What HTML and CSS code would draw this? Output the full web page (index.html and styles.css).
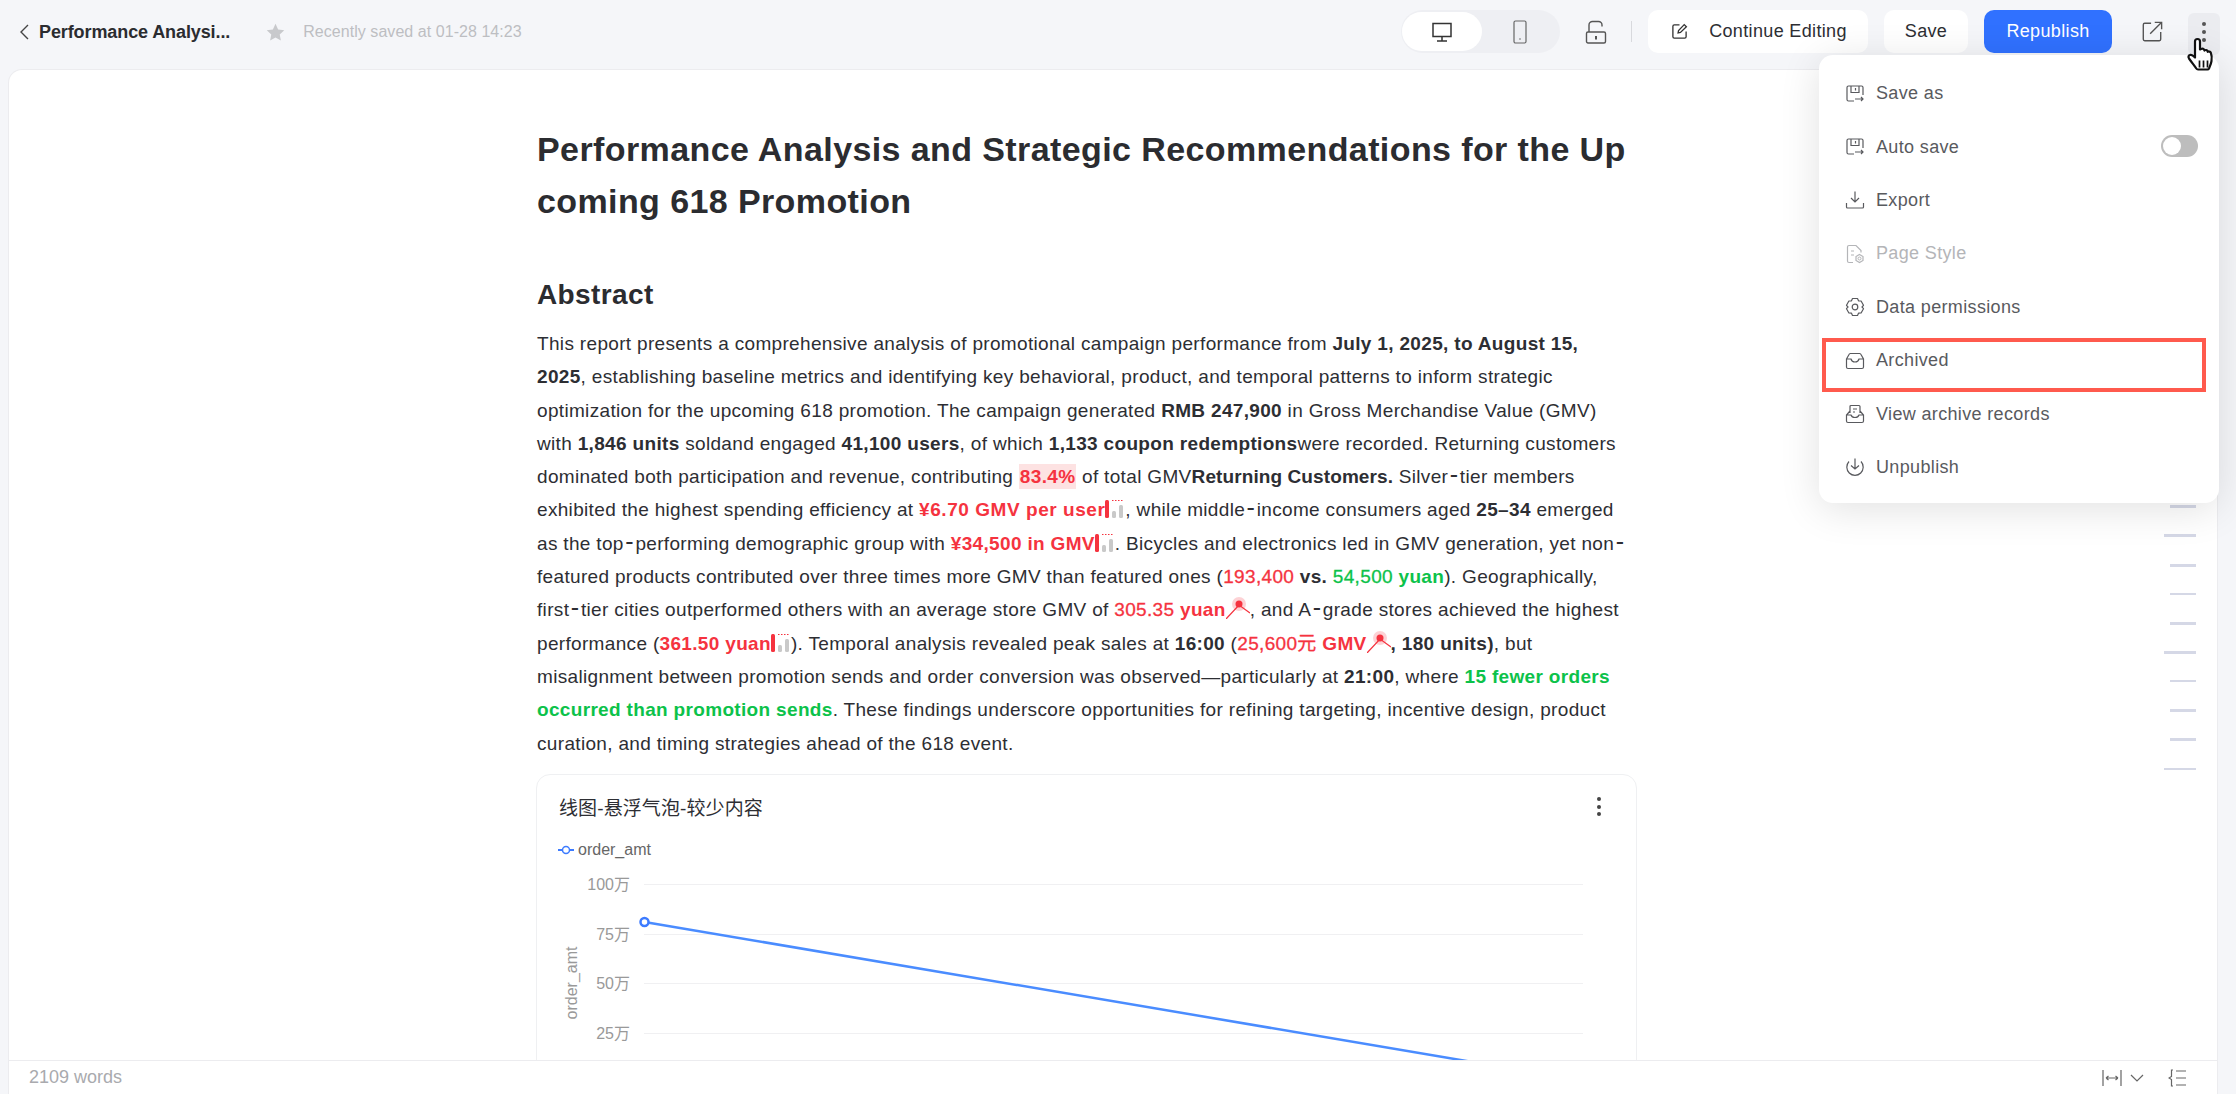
FILE: index.html
```html
<!DOCTYPE html>
<html lang="en">
<head>
    <meta charset="UTF-8">
    <title>Performance Analysis</title>
    <link rel="stylesheet" href="styles.css">
</head>
<body>
    <svg class="icon-defs" width="0" height="0">
        <symbol id="i-bars" viewBox="0 0 20 20">
            <rect x="0" y="1" width="4" height="18" rx="1.5" fill="#f5333f"/>
            <path d="M7 1.5h12" stroke="#f5333f" stroke-width="1" stroke-dasharray="1.5 1.5" fill="none"/>
            <rect x="7" y="12" width="4" height="7" rx="1.5" fill="#c9c9c9"/>
            <rect x="14" y="6" width="4" height="13" rx="1.5" fill="#c9c9c9"/>
        </symbol>
        <symbol id="i-peak" viewBox="0 0 24 22">
            <circle cx="13" cy="7" r="7" fill="#f5333f" opacity=".22"/>
            <circle cx="13" cy="7" r="3.500" fill="#f5333f"/>
            <path d="M0 22 13 8l11 8" stroke="#f5333f" stroke-width="1.3" fill="none"/>
        </symbol>
        <symbol id="i-save" viewBox="0 0 20 20">
            <path d="M9 17H3.500A1.500 1.500 0 0 1 2 15.500V3.500A1.500 1.500 0 0 1 3.500 2h13A1.500 1.500 0 0 1 18 3.500V11M6 2v6.500h8V2M10.500 4v2.500M10 15h8M16 13l2 2-2 2" fill="none" stroke="currentColor" stroke-width="1.200"/>
        </symbol>
    </svg>

    <header class="topbar">
        <div class="topbar-left">
            <svg class="back" width="10" height="16" viewBox="0 0 10 16"><path d="M9 1 2 8l7 7" fill="none" stroke="#444" stroke-width="1.400"/></svg>
            <span class="doc-name">Performance Analysi...</span>
            <svg class="star" width="19" height="19" viewBox="0 0 18 18"><path d="m9 .8 2.500 5.300 5.800.7-4.300 4 1.100 5.700L9 13.700l-5.100 2.800L5 10.800l-4.300-4 5.800-.7z" fill="#c8c9cc"/></svg>
            <span class="saved">Recently saved at 01-28 14:23</span>
        </div>
        <div class="topbar-right">
            <div class="device-switch">
                <span class="device active">
                    <svg width="22" height="22" viewBox="0 0 22 22"><path d="M2 2.500h18v13H2zM11 15.500V20M6 20h10" fill="none" stroke="#333" stroke-width="1.500"/></svg>
                </span>
                <span class="device">
                    <svg width="16" height="24" viewBox="0 0 16 24"><rect x="2" y="1" width="12" height="22" rx="1.500" fill="none" stroke="#666" stroke-width="1.200"/><circle cx="8" cy="19" r=".8" fill="#666"/></svg>
                </span>
            </div>
            <svg class="lock" width="22" height="24" viewBox="0 0 22 24"><path d="M4 12V5a3.500 3.500 0 0 1 3.500-3.500h6A3.500 3.500 0 0 1 17 5v1.500" fill="none" stroke="#555" stroke-width="1.400"/><rect x="1.500" y="12" width="19" height="11" rx="1.500" fill="none" stroke="#555" stroke-width="1.400"/><path d="M11 16v3.500" stroke="#555" stroke-width="2"/></svg>
            <span class="divider"></span>
            <button class="btn btn-edit">
                <svg width="17" height="17" viewBox="0 0 18 18"><path d="M9 2H3.500A1.500 1.500 0 0 0 2 3.500v11A1.500 1.500 0 0 0 3.500 16h11a1.500 1.500 0 0 0 1.500-1.500V9M7.500 10.500 8 8l6-6.300 2.300 2.300L10 10z" fill="none" stroke="#333" stroke-width="1.400"/></svg>
                <span>Continue Editing</span>
            </button>
            <button class="btn btn-save">Save</button>
            <button class="btn btn-primary">Republish</button>
            <svg class="open" width="22" height="22" viewBox="0 0 24 24"><path d="M11 2.500H4A1.500 1.500 0 0 0 2.500 4v16A1.500 1.500 0 0 0 4 21.500h16a1.500 1.500 0 0 0 1.500-1.500v-8M10 14 22 2M15 1.500h7.500V9" fill="none" stroke="#555" stroke-width="1.500"/></svg>
            <span class="more">
                <i></i><i></i><i></i>
            </span>
        </div>
    </header>

    <main class="sheet">
        <div class="scroll">
            <article class="doc">
                <h1>Performance Analysis and Strategic Recommendations for the Up<br>coming 618 Promotion</h1>
                <h2>Abstract</h2>
                <p class="body-text">
                    This report presents a comprehensive analysis of promotional campaign performance from <b>July 1, 2025, to August 15,</b><br>
                    <b>2025</b>, establishing baseline metrics and identifying key behavioral, product, and temporal patterns to inform strategic<br>
                    optimization for the upcoming 618 promotion. The campaign generated <b>RMB 247,900</b> in Gross Merchandise Value (GMV)<br>
                    with <b>1,846 units</b> soldand engaged <b>41,100 users</b>, of which <b>1,133 coupon redemptions</b>were recorded. Returning customers<br>
                    dominated both participation and revenue, contributing <span class="mark">83.4%</span> of total GMV<b class="tight">Returning Customers.</b> Silver<span class="hy">-</span>tier members<br>
                    exhibited the highest spending efficiency at <b class="up wide">¥6.70 GMV per user</b><svg class="mini"><use href="#i-bars"/></svg>, while middle<span class="hy">-</span>income consumers aged <b>25–34</b> emerged<br>
                    as the top<span class="hy">-</span>performing demographic group with <b class="up">¥34,500 in GMV</b><svg class="mini"><use href="#i-bars"/></svg>. Bicycles and electronics led in GMV generation, yet non<span class="hy">-</span><br>
                    featured products contributed over three times more GMV than featured ones (<span class="up num">193,400</span> <b>vs.</b> <span class="down num">54,500</span> <b class="down">yuan</b>). Geographically,<br>
                    first<span class="hy">-</span>tier cities outperformed others with an average store GMV of <span class="up num">305.35</span> <b class="up">yuan</b><svg class="mini mini-peak"><use href="#i-peak"/></svg>, and A<span class="hy">-</span>grade stores achieved the highest<br>
                    performance (<b class="up">361.50 yuan</b><svg class="mini"><use href="#i-bars"/></svg>). Temporal analysis revealed peak sales at <b>16:00</b> (<span class="up num">25,600元</span> <b class="up">GMV</b><svg class="mini mini-peak"><use href="#i-peak"/></svg><b>, 180 units)</b>, but<br>
                    misalignment between promotion sends and order conversion was observed—particularly at <b>21:00</b>, where <b class="down">15 fewer orders</b><br>
                    <b class="down">occurred than promotion sends</b>. These findings underscore opportunities for refining targeting, incentive design, product<br>
                    curation, and timing strategies ahead of the 618 event.
                </p>
                <section class="chart-card">
                    <div class="chart-head">
                        <span class="chart-title">线图-悬浮气泡-较少内容</span>
                        <span class="kebab"><i></i><i></i><i></i></span>
                    </div>
                    <div class="legend">
                        <svg width="16" height="10" viewBox="0 0 16 10"><path d="M0 5h16" stroke="#3d7bff" stroke-width="2"/><circle cx="8" cy="5" r="3.500" fill="#fff" stroke="#3d7bff" stroke-width="1.500"/></svg>
                        <span>order_amt</span>
                    </div>
                    <svg class="plot" width="1098" height="220" viewBox="0 0 1098 220">
                        <g class="grid">
                            <path d="M106 16.500h939M106 66.500h939M106 115.500h939M106 165.500h939"/>
                        </g>
                        <g class="ticks">
                            <text x="92" y="22">100万</text>
                            <text x="92" y="72">75万</text>
                            <text x="92" y="121">50万</text>
                            <text x="92" y="171">25万</text>
                        </g>
                        <text class="axis-name" transform="translate(39 115) rotate(-90)">order_amt</text>
                        <path d="M106.500 54 1100 222" fill="none" stroke="#4a8cff" stroke-width="2.500"/>
                        <circle cx="106.500" cy="54" r="4" fill="#fff" stroke="#3d7bff" stroke-width="2.500"/>
                    </svg>
                </section>
            </article>
        </div>
        <footer class="statusbar">
            <span class="word-count">2109 words</span>
            <div class="status-tools">
                <svg width="20" height="18" viewBox="0 0 20 18"><path d="M1 1v16M19 1v16M4 9h12M4 9l2.500-2M4 9l2.500 2M16 9l-2.500-2M16 9l-2.500 2" fill="none" stroke="#666" stroke-width="1.200"/></svg>
                <svg class="caret" width="14" height="8" viewBox="0 0 14 8"><path d="m1 1 6 6 6-6" fill="none" stroke="#666" stroke-width="1.200"/></svg>
                <svg class="outline" width="18" height="18" viewBox="0 0 18 18"><path d="M5 1H3.500v6.500L1 9l2.500 1.500V17H5M8 2h10M8 9h10M8 16h10" fill="none" stroke="#666" stroke-width="1.200"/></svg>
            </div>
        </footer>
    </main>

    <!-- outline ticks, right edge of the sheet -->
    <div class="toc">
        <i></i><i class="long"></i><i></i><i class="thin"></i><i></i><i class="long"></i><i class="thin"></i><i></i><i></i><i class="long thin"></i>
    </div>

    <div class="menu">
        <div class="menu-item"><svg width="20" height="20"><use href="#i-save"/></svg>Save as</div>
        <div class="menu-item"><svg width="20" height="20"><use href="#i-save"/></svg>Auto save<span class="switch"></span></div>
        <div class="menu-item">
            <svg width="20" height="20" viewBox="0 0 20 20"><path d="M10 1.500V12M6 8l4 4 4-4M1.500 13v4a1 1 0 0 0 1 1h15a1 1 0 0 0 1-1v-4" fill="none" stroke="currentColor" stroke-width="1.200"/></svg>Export
        </div>
        <div class="menu-item disabled">
            <svg width="20" height="20" viewBox="0 0 20 20"><path d="M8 18.500H4a1.500 1.500 0 0 1-1.500-1.500V3A1.500 1.500 0 0 1 4 1.500h7l5 5v2M6 7h3M6 11h3" fill="none" stroke="currentColor" stroke-width="1.200"/><circle cx="14.500" cy="14.500" r="1.500" fill="none" stroke="currentColor"/><path d="m14.500 10.500 3.500 2v4l-3.500 2-3.500-2v-4z" fill="none" stroke="currentColor" stroke-width="1.200"/></svg>Page Style
        </div>
        <div class="menu-item">
            <svg width="20" height="20" viewBox="0 0 20 20"><path d="M7.500 1.500h5l1 2.300 2.600.2 2.400 4.300-1.500 1.700 1.500 1.700-2.400 4.300-2.600.2-1 2.300h-5l-1-2.300-2.600-.2-2.400-4.300L3 10 1.500 8.300 3.900 4l2.600-.2z" fill="none" stroke="currentColor" stroke-width="1.200" stroke-linejoin="round"/><circle cx="10" cy="10" r="2.800" fill="none" stroke="currentColor" stroke-width="1.200"/></svg>Data permissions
        </div>
        <div class="menu-item highlighted">
            <svg width="20" height="20" viewBox="0 0 20 20"><path d="M1.500 8 4 3.500A1.500 1.500 0 0 1 5.300 2.500h9.400A1.500 1.500 0 0 1 16 3.500L18.500 8v8a1.500 1.500 0 0 1-1.500 1.500H3A1.500 1.500 0 0 1 1.500 16zM1.500 8H6c.5 2 2 3 4 3s3.500-1 4-3h4.500" fill="none" stroke="currentColor" stroke-width="1.200"/></svg>Archived
        </div>
        <div class="menu-item">
            <svg width="20" height="20" viewBox="0 0 20 20"><path d="M5 9V2.500A1 1 0 0 1 6 1.500h8a1 1 0 0 1 1 1V9M8 5h4M8 8h2M5 7 1.500 11v6a1.500 1.500 0 0 0 1.500 1.500h14a1.500 1.500 0 0 0 1.500-1.500v-6L15 7M1.500 11H6c.5 1.500 2 2.500 4 2.500s3.500-1 4-2.500h4.500" fill="none" stroke="currentColor" stroke-width="1.200"/></svg>View archive records
        </div>
        <div class="menu-item">
            <svg width="20" height="20" viewBox="0 0 20 20"><path d="M10 1.500V12M6 8.500l4 3.500 4-3.500M4 4.500a8.200 8.200 0 1 0 12 0" fill="none" stroke="currentColor" stroke-width="1.200"/></svg>Unpublish
        </div>
    </div>

    <svg class="hand" width="32" height="37" viewBox="0 0 32 36">
        <path d="M9 20V4a2.500 2.500 0 0 1 5 0v8l1-.5c1-.5 2.500-.5 3 .5l.5 1c1-.8 2.500-.6 3 .5l.3.8c1-.6 2.500-.3 3 .8.8 2 1.200 5 .7 8.400-.4 3-1.500 5-2.500 7.500-.3.6-.8 1-1.500 1H12c-.8 0-1.300-.4-1.700-1-2-3-4.500-6-7.300-10-1-1.500-.5-3 .8-3.500 1.200-.5 2.500 0 3.500 1z" fill="#fff" stroke="#111" stroke-width="2.200" stroke-linejoin="round"/>
        <path d="M13.500 23v7M17.500 23v7M21.500 23v7" stroke="#111" stroke-width="1.700"/>
    </svg>
</body>
</html>
```

FILE: styles.css
```css
* {
    box-sizing: border-box;
}

body {
    margin: 0;
    width: 2236px;
    height: 1094px;
    overflow: hidden;
    display: flex;
    flex-direction: column;
    position: relative;
    background: #f5f6f9;
    color: #2d2e33;
    font-family: "Liberation Sans", "Noto Sans CJK SC", sans-serif;
}

.icon-defs {
    position: absolute;
}

/* top bar */
.topbar {
    height: 69px;
    flex: none;
    display: flex;
    align-items: flex-start;
    justify-content: space-between;
    padding: 10px 16px 0 19px;
}

.topbar-left {
    display: flex;
    align-items: center;
    height: 44px;
}

.doc-name {
    margin-left: 10px;
    font-size: 18px;
    font-weight: 700;
    letter-spacing: -0.1px;
    color: #2b2c30;
}

.star {
    margin-left: 36px;
}

.saved {
    margin-left: 18px;
    font-size: 16px;
    letter-spacing: 0.05px;
    color: #bdbec2;
}

.topbar-right {
    display: flex;
    align-items: center;
    height: 43px;
}

.device-switch {
    display: flex;
    width: 159px;
    height: 43px;
    padding: 2px 1px;
    border-radius: 22px;
    background: #eeeff3;
}

.device {
    width: 79px;
    display: flex;
    align-items: center;
    justify-content: center;
    border-radius: 20px;
}

.device.active {
    width: 82px;
    background: #fff;
}

.lock {
    margin-left: 25px;
}

.divider {
    width: 1px;
    height: 21px;
    margin-left: 24px;
    background: #d8d9dd;
}

.btn {
    height: 43px;
    border: none;
    border-radius: 10px;
    background: #fff;
    color: #2d2e33;
    font-family: inherit;
    font-size: 18px;
    letter-spacing: 0.35px;
    display: flex;
    align-items: center;
    justify-content: center;
}

.btn-edit {
    width: 220px;
    margin-left: 16px;
    gap: 21px;
    padding-right: 4px;
}

.btn-save {
    width: 84px;
    margin-left: 16px;
}

.btn-primary {
    width: 128px;
    margin-left: 16px;
    background: #3071ff;
    color: #fff;
}

.open {
    margin-left: 29px;
}

.more {
    width: 32px;
    height: 42px;
    margin-left: 25px;
    margin-top: 3px;
    padding-top: 9px;
    display: flex;
    flex-direction: column;
    align-items: center;
    gap: 4px;
    align-self: flex-start;
    border-radius: 6px;
    background: #ebecf0;
}

.more i {
    width: 4px;
    height: 4px;
    border-radius: 50%;
    background: #555;
}

/* sheet */
.sheet {
    flex: 1;
    min-height: 0;
    margin: 0 18px 0 8px;
    display: flex;
    flex-direction: column;
    background: #fff;
    border: 1px solid #ececef;
    border-bottom: none;
    border-radius: 14px 14px 0 0;
}

.scroll {
    flex: 1;
    min-height: 0;
    overflow: hidden;
}

.doc {
    width: 1102px;
    margin-left: 528px;
    padding-top: 53px;
}

h1 {
    margin: 0;
    font-size: 34px;
    line-height: 52px;
    font-weight: 700;
    letter-spacing: 0.4px;
    color: #2b2c30;
}

h2 {
    margin: 48px 0 12px;
    font-size: 28px;
    line-height: 40px;
    font-weight: 700;
    letter-spacing: 0.4px;
    color: #2b2c30;
}

.body-text {
    margin: 0;
    font-size: 19px;
    line-height: 33.300px;
    letter-spacing: 0.33px;
    white-space: nowrap;
}

.body-text b {
    font-weight: 700;
}

.body-text .up {
    color: #f5333f;
}

.body-text .down {
    color: #0cc24a;
}

.body-text .num {
    -webkit-text-stroke: 0.3px currentColor;
}

.body-text .wide {
    letter-spacing: 0.55px;
}

.body-text .tight {
    letter-spacing: 0.1px;
}

/* the hyphen sits wider and higher in the source font */
.hy {
    font-size: 25px;
    line-height: 0;
    padding: 0 1.500px;
}

.mark {
    padding: 2px 1px;
    background: #fde2e2;
    color: #f5333f;
    font-weight: 700;
}

.mini {
    width: 20px;
    height: 20px;
    vertical-align: -3px;
}

.mini-peak {
    width: 24px;
    height: 22px;
}

/* chart */
.chart-card {
    width: 1101px;
    height: 400px;
    margin-top: 14px;
    margin-left: -1px;
    padding: 0 1px;
    border: 1px solid #eff0f2;
    border-radius: 14px;
}

.chart-head {
    display: flex;
    justify-content: space-between;
    align-items: center;
    height: 30px;
    margin-top: 17px;
    padding: 0 21px;
}

.chart-title {
    font-size: 19px;
    letter-spacing: 0.1px;
    color: #2d2e33;
}

.kebab {
    display: flex;
    flex-direction: column;
    gap: 3.500px;
    margin-right: 13px;
}

.kebab i {
    width: 4px;
    height: 4px;
    border-radius: 50%;
    background: #444;
}

.legend {
    display: flex;
    align-items: center;
    gap: 4px;
    margin-top: 19px;
    padding-left: 20px;
    font-size: 16px;
    color: #666;
}

.plot {
    display: block;
    margin-top: 9px;
}

.grid path {
    fill: none;
    stroke: #f0f0f2;
    stroke-width: 1;
}

.ticks text {
    font-size: 16px;
    fill: #999;
    text-anchor: end;
}

.axis-name {
    font-size: 16px;
    fill: #999;
    text-anchor: middle;
}

/* bottom status bar */
.statusbar {
    height: 34px;
    flex: none;
    display: flex;
    align-items: center;
    justify-content: space-between;
    padding: 0 31px 0 20px;
    border-top: 1px solid #ececef;
    background: #fff;
}

.word-count {
    font-size: 18px;
    color: #a9aaae;
}

.status-tools {
    display: flex;
    align-items: center;
}

.caret {
    margin-left: 8px;
}

.outline {
    margin-left: 24px;
}

/* toc ticks */
.toc {
    position: absolute;
    top: 505px;
    left: 2164px;
    width: 32px;
    display: flex;
    flex-direction: column;
    align-items: flex-end;
    gap: 26.400px;
}

.toc i {
    display: block;
    width: 26px;
    height: 3px;
    background: #d5d8e6;
}

.toc i.long {
    width: 32px;
}

.toc i.thin {
    height: 2px;
}

/* dropdown */
.menu {
    position: absolute;
    top: 55px;
    left: 1819px;
    width: 400px;
    height: 448px;
    padding: 12px 0 0;
    background: #fff;
    border-radius: 14px;
    box-shadow: 0 6px 40px rgba(0, 0, 0, 0.12);
}

.menu-item {
    position: relative;
    height: 53.400px;
    display: flex;
    align-items: center;
    gap: 11px;
    padding-left: 26px;
    font-size: 18px;
    letter-spacing: 0.35px;
    color: #595a5e;
}

.menu-item.disabled {
    color: #b4b5b8;
}

.highlighted::after {
    content: "";
    box-sizing: border-box;
    position: absolute;
    left: 3px;
    top: 4px;
    width: 384px;
    height: 54px;
    border: 4px solid #ff5a4d;
}

.switch {
    position: absolute;
    left: 342px;
    top: 15px;
    width: 37px;
    height: 22px;
    border-radius: 11px;
    background: #bdbdbd;
}

.switch::after {
    content: "";
    position: absolute;
    left: 2px;
    top: 2px;
    width: 18px;
    height: 18px;
    border-radius: 50%;
    background: #fff;
}

.hand {
    position: absolute;
    top: 37px;
    left: 2186px;
}
```
